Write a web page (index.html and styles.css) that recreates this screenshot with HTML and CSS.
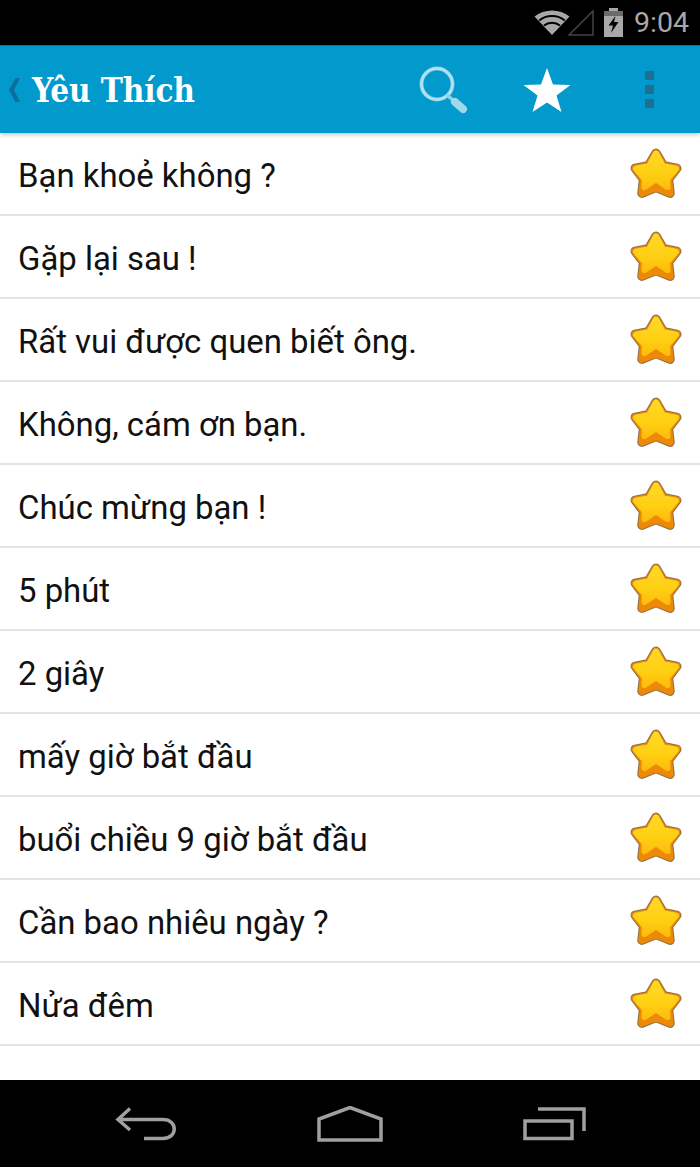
FILE: index.html
```html
<!DOCTYPE html>
<html lang="vi">
<head>
    <meta charset="UTF-8">
    <meta name="viewport" content="width=device-width, initial-scale=1.0">
    <title>Yêu Thích</title>
    <link rel="stylesheet" href="styles.css">
</head>
<body>
    <svg class="defs" width="0" height="0">
        <defs>
            <linearGradient id="starFill" gradientUnits="userSpaceOnUse" x1="0" y1="2" x2="0" y2="42">
                <stop offset="0" stop-color="#ffd92a"/>
                <stop offset="0.55" stop-color="#ffd012"/>
                <stop offset="1" stop-color="#fdb80c"/>
            </linearGradient>
            <symbol id="star" viewBox="0 0 50 50">
                <path d="M25 5 L32 17 L45 19.5 L37 30 L38.5 43.5 L25 38 L11.5 43.5 L13 30 L5 19.5 L18 17 Z" fill="#8f6f45" stroke="#8f6f45" stroke-width="9" stroke-linejoin="round"/>
                <path d="M25 5 L32 17 L45 19.5 L37 30 L38.5 43.5 L25 38 L11.5 43.5 L13 30 L5 19.5 L18 17 Z" fill="#ec8a08" stroke="#ec8a08" stroke-width="7" stroke-linejoin="round"/>
                <path d="M25 5.5 L31.5 17.5 L44 20 L35.5 30 L36 37.5 L25 30 L14 37.5 L14.5 30 L6 20 L18.5 17.5 Z" fill="url(#starFill)" stroke="url(#starFill)" stroke-width="6" stroke-linejoin="round"/>
            </symbol>
        </defs>
    </svg>

    <div class="status-bar">
        <svg class="wifi" width="36" height="26" viewBox="0 0 36 26">
            <path d="M18 25 L0.5 6.5 C10 -1.5 26 -1.5 35.5 6.5 Z" fill="#a8a8a8"/>
            <path d="M5.2 10.5 C12 4.5 24 4.5 30.8 10.5 M10 15.5 C14.5 11.8 21.5 11.8 26 15.5" fill="none" stroke="#000" stroke-width="2"/>
        </svg>
        <svg class="signal" width="26" height="26" viewBox="0 0 26 26">
            <path d="M1 25 L25 1 V25 Z" fill="none" stroke="#444" stroke-width="1.5"/>
        </svg>
        <svg class="battery" width="21" height="29" viewBox="0 0 21 29">
            <path d="M6 0 H15 V3 H20 V29 H1 V3 H6 Z" fill="#a8a8a8"/>
            <path d="M1 3 H20 V8 H1 Z" fill="#6b6b6b"/>
            <path d="M12.5 8 L5.5 17.5 H10 L8 25 L15.5 14 H11 Z" fill="#000"/>
        </svg>
        <span class="clock">9:04</span>
    </div>

    <header class="action-bar">
        <div class="title-group">
            <svg class="back" width="13" height="26" viewBox="0 0 13 26">
                <path d="M12 1 H7.5 L1 13 L7.5 25 H12 L6 13 Z" fill="#0b6f9c"/>
            </svg>
            <h1>Yêu Thích</h1>
        </div>
        <div class="actions">
            <svg class="search" width="50" height="50" viewBox="0 0 50 50">
                <circle cx="18" cy="19" r="15.5" fill="none" stroke="#7fcde6" stroke-width="4"/>
                <circle cx="18" cy="19" r="15.5" fill="none" stroke="#b5e2f0" stroke-width="2.5"/>
                <path d="M28 30 L35 36" stroke="#8fd3e9" stroke-width="3.5"/>
                <path d="M36 37 L44 44" stroke="#9fd9ec" stroke-width="8" stroke-linecap="round"/>
            </svg>
            <svg class="fav" width="48" height="46" viewBox="0 0 48 46">
                <path d="M24 1 L30 17.5 L47.5 18 L33.5 28.5 L38.5 45 L24 35.5 L9.5 45 L14.5 28.5 L0.5 18 L18 17.5 Z" fill="#fff"/>
            </svg>
            <div class="overflow">
                <span></span><span></span><span></span>
            </div>
        </div>
    </header>

    <ul class="phrase-list">
        <li><span>Bạn khoẻ không ?</span><svg class="star"><use href="#star"/></svg></li>
        <li><span>Gặp lại sau !</span><svg class="star"><use href="#star"/></svg></li>
        <li><span>Rất vui được quen biết ông.</span><svg class="star"><use href="#star"/></svg></li>
        <li><span>Không, cám ơn bạn.</span><svg class="star"><use href="#star"/></svg></li>
        <li><span>Chúc mừng bạn !</span><svg class="star"><use href="#star"/></svg></li>
        <li><span>5 phút</span><svg class="star"><use href="#star"/></svg></li>
        <li><span>2 giây</span><svg class="star"><use href="#star"/></svg></li>
        <li><span>mấy giờ bắt đầu</span><svg class="star"><use href="#star"/></svg></li>
        <li><span>buổi chiều 9 giờ bắt đầu</span><svg class="star"><use href="#star"/></svg></li>
        <li><span>Cần bao nhiêu ngày ?</span><svg class="star"><use href="#star"/></svg></li>
        <li><span>Nửa đêm</span><svg class="star"><use href="#star"/></svg></li>
    </ul>

    <nav class="nav-bar">
        <svg width="62" height="34" viewBox="0 0 62 34">
            <path d="M15 1.5 L3 12.5 L15 23 M3 12.5 H48 C63 12.5 63 31.5 48 31.5 H29" fill="none" stroke="#a0a0a0" stroke-width="3.5"/>
        </svg>
        <svg width="66" height="36" viewBox="0 0 66 36">
            <path d="M2 34 V13 L33 1.5 L64 13 V34 Z" fill="none" stroke="#a0a0a0" stroke-width="3.5"/>
        </svg>
        <svg width="64" height="34" viewBox="0 0 64 34">
            <path d="M15 2 H61 V24 M2 14 H49 V31.5 H2 Z" fill="none" stroke="#a0a0a0" stroke-width="3.5"/>
        </svg>
    </nav>
</body>
</html>
```

FILE: styles.css
```css
html, body {
    margin: 0;
    padding: 0;
}
body {
    width: 700px;
    height: 1167px;
    display: flex;
    flex-direction: column;
    overflow: hidden;
    background: #fff;
    font-family: 'Roboto', sans-serif;
}
.defs {
    position: absolute;
}
.status-bar {
    height: 45px;
    flex: none;
    background: #000;
    display: flex;
    align-items: center;
    justify-content: flex-end;
    padding-right: 11px;
}
.wifi {
    margin-right: -2px;
}
.signal {
    margin-right: 9px;
}
.battery {
    margin-right: 10px;
}
.clock {
    color: #a8a8a8;
    font-size: 28.5px;
    line-height: 45px;
}
.action-bar {
    height: 88px;
    flex: none;
    box-sizing: border-box;
    border-top: 1px solid #0b6f94;
    background: #0299cc;
    box-shadow: 0 1px 5px rgba(0, 0, 0, 0.3);
    display: flex;
    align-items: center;
    justify-content: space-between;
    position: relative;
}
.title-group {
    display: flex;
    align-items: center;
    padding-left: 8px;
}
.title-group h1 {
    margin: 2px 0 0 11px;
    font-family: 'DejaVu Serif Condensed', 'DejaVu Serif', serif;
    font-stretch: condensed;
    font-size: 33px;
    letter-spacing: -0.1px;
    font-weight: bold;
    color: #fff;
}
.actions {
    display: flex;
    align-items: center;
}
.search {
    margin-right: 54px;
}
.fav {
    margin-right: 74px;
}
.overflow {
    display: flex;
    flex-direction: column;
    gap: 5px;
    margin-right: 46px;
}
.overflow span {
    display: block;
    width: 9px;
    height: 9px;
    background: #1f6f93;
}
.phrase-list {
    flex: 1;
    margin: 0;
    padding: 0;
    list-style: none;
}
.phrase-list li {
    height: 83px;
    box-sizing: border-box;
    border-bottom: 2px solid #e4e4e4;
    display: flex;
    align-items: center;
    justify-content: space-between;
    padding: 0 18px 0 18px;
    font-size: 32.9px;
    color: #111;
}
.phrase-list li span {
    padding-top: 4px;
}
.star {
    width: 52px;
    height: 52px;
}
.nav-bar {
    height: 87px;
    flex: none;
    background: #000;
    display: flex;
    align-items: center;
    justify-content: space-between;
    padding: 0 113px 0 115px;
}
```
